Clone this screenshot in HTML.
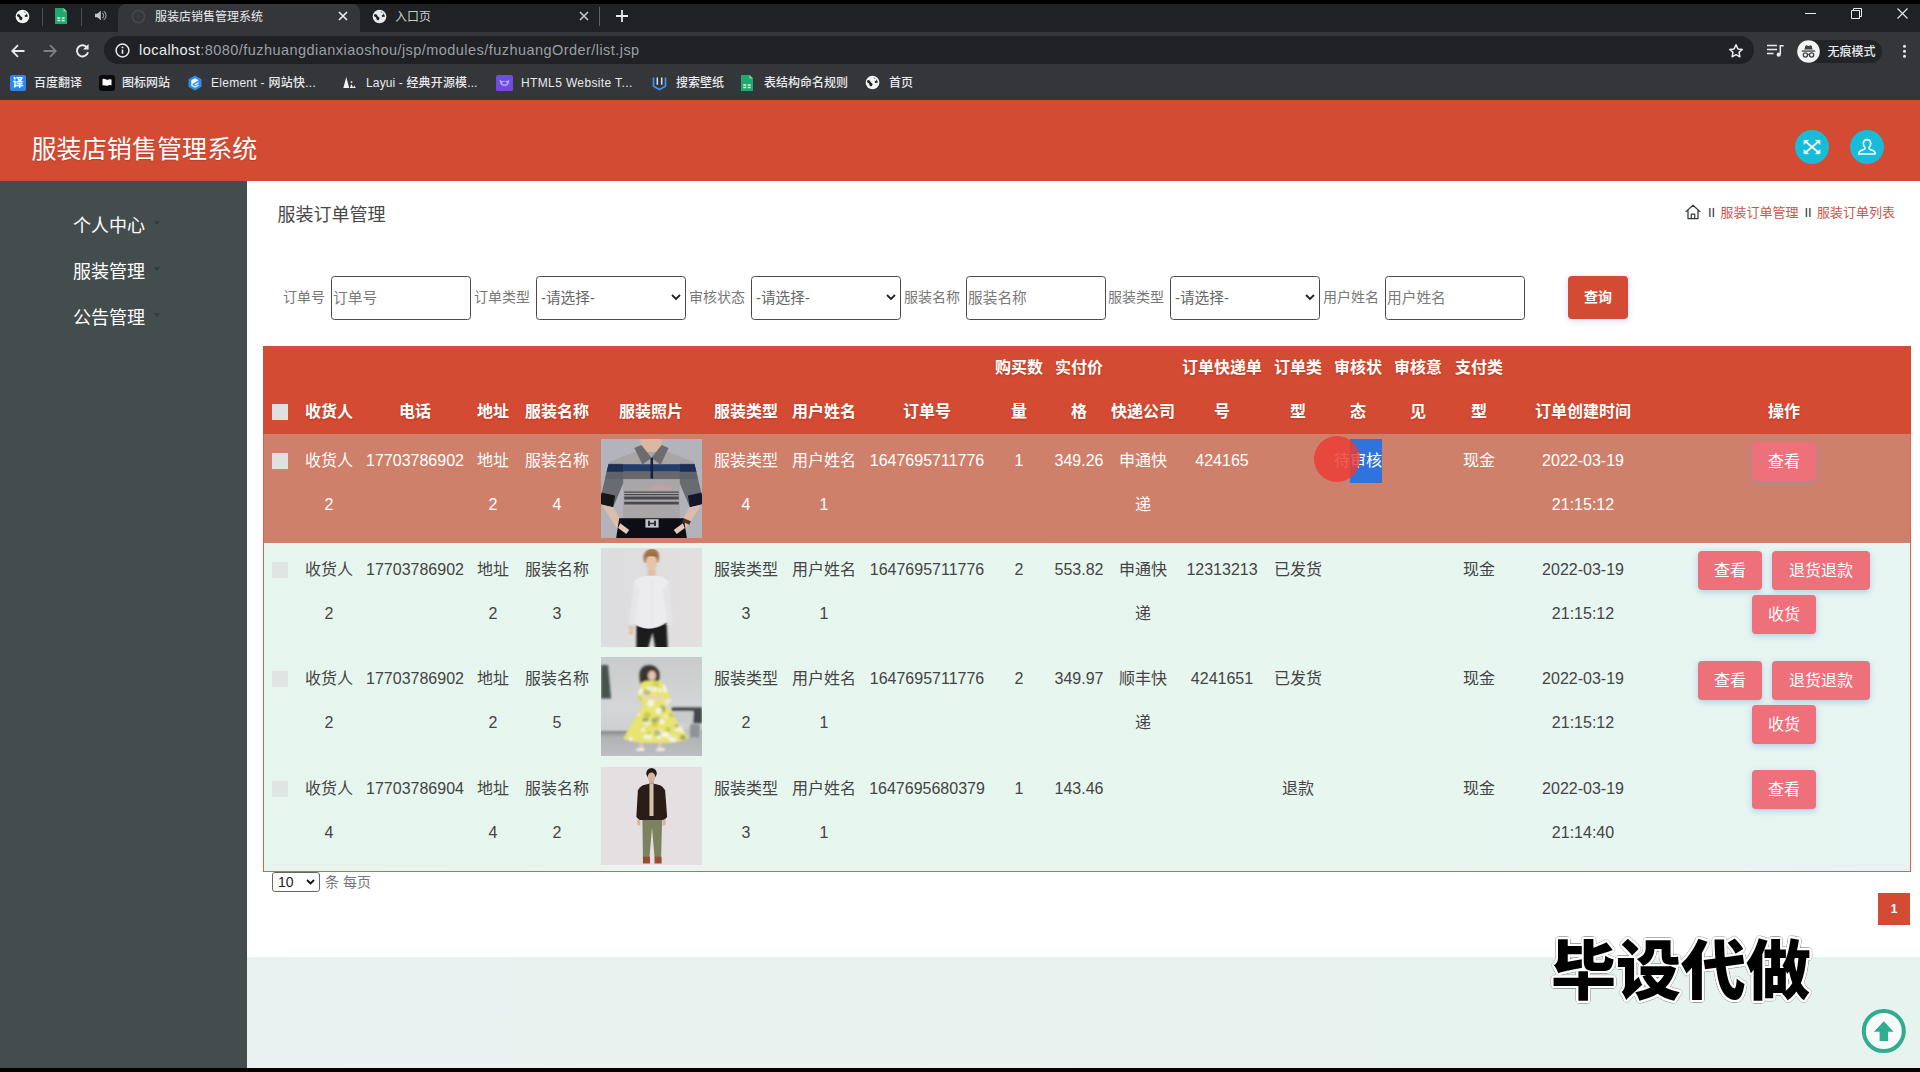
<!DOCTYPE html>
<html lang="zh-CN">
<head>
<meta charset="utf-8">
<title>服装店销售管理系统</title>
<style>
*{box-sizing:border-box;margin:0;padding:0}
html,body{width:1920px;height:1072px;overflow:hidden;background:#000}
body{position:relative;font-family:"Liberation Sans","Noto Sans CJK SC",sans-serif;color:#333}
.abs{position:absolute}
/* ---------- browser chrome ---------- */
#tabstrip{left:0;top:4px;width:1920px;height:28px;background:#202124}
#acttab{left:118px;top:4px;width:242px;height:28px;background:#35363a;border-radius:8px 8px 0 0}
#toolbar{left:0;top:32px;width:1920px;height:68px;background:#35363a}
#omni{left:104px;top:36px;width:1650px;height:28px;background:#202124;border-radius:14px}
.tabtxt{font-size:12px;color:#e8eaed;line-height:16px;white-space:nowrap}
.bm{font-size:12px;color:#e8eaed;line-height:16px;top:75px;white-space:nowrap;font-weight:500}
#url{left:139px;top:41px;font-size:14.5px;line-height:18px;color:#9aa0a6;white-space:nowrap;letter-spacing:0.45px}
#url b{font-weight:400;color:#e8eaed}
/* ---------- app ---------- */
#hdr{left:0;top:100px;width:1920px;height:81px;background:#d34b32}
#hdr h1{position:absolute;left:31.500px;top:31.500px;font-size:25px;line-height:34px;font-weight:400;color:#fff;letter-spacing:0.1px;white-space:nowrap;text-shadow:0 1px 1px rgba(0,0,0,.15)}
#side{left:0;top:181px;width:247px;height:887px;background:#444d4e}
#side div{position:absolute;left:73px;font-size:18px;line-height:24px;color:#fff;white-space:nowrap}
#main{left:247px;top:181px;width:1673px;height:776px;background:#fff}
#foot{left:247px;top:957px;width:1673px;height:111px;background:linear-gradient(90deg,#e9f2f0,#e7f3ee)}
#ptitle{left:277.500px;top:202.500px;font-size:18px;line-height:24px;color:#484848;white-space:nowrap}
.crumb{top:204px;font-size:13px;line-height:17px;color:#d0524b;white-space:nowrap}
.crumb i{font-style:normal;color:#333}
.flab{top:288px;font-size:14px;line-height:18px;color:#777;white-space:nowrap}
.fin{top:276px;height:43.500px;border:1px solid #4a4a4a;border-radius:3.500px;background:#fff;font-size:14.7px;line-height:41px;color:#7a7a7a;white-space:nowrap;padding-top:1px}
.fin.t{width:140px;padding-left:1px}
.fin.s{width:150px;padding-left:4px;color:#666}
.fin.s svg{position:absolute;right:4px;top:17px}
#qbtn{left:1568px;top:276px;width:60px;height:43px;background:#d34b32;border-radius:4px;color:#fff;font-size:14px;font-weight:700;line-height:43px;text-align:center;box-shadow:0 2px 7px rgba(140,150,220,.35)}

#tbl{left:263px;top:346px;width:1648px;height:526px;border:1px solid #da604a;background:linear-gradient(90deg,#e6f6ee 0%,#e7f6ef 70%,#e7f5f2 100%)}
#thead{left:263px;top:346px;width:1648px;height:88px;background:#d34b32}
#hov{left:264px;top:434px;width:1646px;height:108.500px;background:#cf806b}
.cb{width:16px;height:16px;background:#e0e0e0}
.cb.l{background:#dfe5e3}
.th{width:200px;text-align:center;font-size:16px;line-height:44px;font-weight:700;color:#fff;white-space:nowrap;text-shadow:0 1px 2px rgba(120,30,10,.35)}
.td{width:200px;text-align:center;font-size:16px;line-height:44px;color:#444;white-space:nowrap}
.td.h{color:#fff}
.sel{background:#2f74dd;color:#fff;display:inline-block;line-height:44px;height:44px;vertical-align:top}
.btn{height:39px;background:#ee707b;border-radius:4px;color:#fff;font-size:16px;line-height:39px;text-align:center;box-shadow:0 2px 6px rgba(120,150,220,.45);white-space:nowrap}

#wm{left:1551px;top:919px;font-family:"Noto Sans CJK SC",sans-serif;font-weight:900;font-size:65px;line-height:94px;color:#000;white-space:nowrap;letter-spacing:0px;-webkit-text-stroke:0;text-shadow:2.20px 0.00px 0 #fff,2.03px 0.84px 0 #fff,1.56px 1.56px 0 #fff,0.84px 2.03px 0 #fff,0.00px 2.20px 0 #fff,-0.84px 2.03px 0 #fff,-1.56px 1.56px 0 #fff,-2.03px 0.84px 0 #fff,-2.20px 0.00px 0 #fff,-2.03px -0.84px 0 #fff,-1.56px -1.56px 0 #fff,-0.84px -2.03px 0 #fff,-0.00px -2.20px 0 #fff,0.84px -2.03px 0 #fff,1.56px -1.56px 0 #fff,2.03px -0.84px 0 #fff,3.10px 0.00px 0 rgba(140,140,140,.42),2.86px 1.19px 0 rgba(140,140,140,.42),2.19px 2.19px 0 rgba(140,140,140,.42),1.19px 2.86px 0 rgba(140,140,140,.42),0.00px 3.10px 0 rgba(140,140,140,.42),-1.19px 2.86px 0 rgba(140,140,140,.42),-2.19px 2.19px 0 rgba(140,140,140,.42),-2.86px 1.19px 0 rgba(140,140,140,.42),-3.10px 0.00px 0 rgba(140,140,140,.42),-2.86px -1.19px 0 rgba(140,140,140,.42),-2.19px -2.19px 0 rgba(140,140,140,.42),-1.19px -2.86px 0 rgba(140,140,140,.42),-0.00px -3.10px 0 rgba(140,140,140,.42),1.19px -2.86px 0 rgba(140,140,140,.42),2.19px -2.19px 0 rgba(140,140,140,.42),2.86px -1.19px 0 rgba(140,140,140,.42)}
</style>
</head>
<body>
<!-- browser chrome -->
<div class="abs" id="tabstrip"></div>
<div class="abs" id="acttab"></div>
<div class="abs" id="toolbar"></div>
<div class="abs" id="omni"></div>
<div class="abs tabtxt" style="left:155px;top:9px">服装店销售管理系统</div>
<div class="abs tabtxt" style="left:395px;top:9px;color:#c8cacd">入口页</div>
<div class="abs" id="url"><b>localhost</b>:8080/fuzhuangdianxiaoshou/jsp/modules/fuzhuangOrder/list.jsp</div>
<div class="abs bm" style="left:34px">百度翻译</div>
<div class="abs bm" style="left:122px">图标网站</div>
<div class="abs bm" style="left:211px;letter-spacing:.27px">Element - 网站快...</div>
<div class="abs bm" style="left:366px;letter-spacing:.14px">Layui - 经典开源模...</div>
<div class="abs bm" style="left:521px;letter-spacing:.37px">HTML5 Website T...</div>
<div class="abs bm" style="left:676px">搜索壁纸</div>
<div class="abs bm" style="left:764px">表结构命名规则</div>
<div class="abs bm" style="left:889px">首页</div>
<!--CHROME-START-->
<!-- pinned tabs -->
<svg class="abs" style="left:15px;top:9px" width="15" height="15" viewBox="0 0 16 16"><circle cx="8" cy="8" r="7.300" fill="#f1f3f4"/><path d="M3.200 5.200c1.500.1 2.300.9 2.600 2 .3 1 1.300 1.100 1.900 1.800.6.700.2 1.900-.6 2.600-.7.600-1.700.3-2.200-.5-.4-.8-.1-1.700-.8-2.300-.7-.5-1.700-.8-1.900-1.700-.1-.7.300-1.500 1-1.900zM9.200 2.300c.2 1 1 1.400 1.900 1.500.9.100 1.300.9 1 1.700-.3.800-1.300.8-1.700 1.500-.3.600.2 1.300.9 1.400.9.100 1.700-.3 2.400.2-.1-2.900-1.800-5.400-4.500-6.300z" fill="#202124"/></svg>
<div class="abs" style="left:42px;top:8px;width:1px;height:18px;background:#4a4d51"></div>
<svg class="abs" style="left:53px;top:8px" width="16" height="16" viewBox="0 0 16 16"><path d="M2 0h8.500L14 3.500V16H2z" fill="#21a86f"/><path d="M10.500 0L14 3.500h-3.500z" fill="#8ed1b3"/><path d="M4.300 9.300h3v1.400h-3zM8.700 9.300h3v1.400h-3zM4.300 11.800h3v1.400h-3zM8.700 11.800h3v1.400h-3z" fill="#d8f3e7"/></svg>
<div class="abs" style="left:81px;top:8px;width:1px;height:18px;background:#4a4d51"></div>
<svg class="abs" style="left:95px;top:10px" width="12" height="11" viewBox="0 0 12 11"><path d="M0 3.800h2.200L5.800.7v9.600L2.200 7.200H0z" fill="#c4c7c9"/><path d="M7.300 3.100c.9.500 1.400 1.400 1.400 2.400s-.5 1.900-1.400 2.400M8.700 1.200c1.500.9 2.400 2.500 2.400 4.300s-.9 3.400-2.400 4.300" fill="none" stroke="#9da0a3" stroke-width="1.100"/></svg>
<!-- active tab favicon (faint) -->
<svg class="abs" style="left:131px;top:9px" width="15" height="15" viewBox="0 0 16 16"><circle cx="8" cy="8" r="6.500" fill="none" stroke="#46474b" stroke-width="2"/><circle cx="8" cy="8" r="2" fill="#3d3e42"/></svg>
<!-- tab close buttons -->
<svg class="abs" style="left:338px;top:11px" width="10" height="10" viewBox="0 0 10 10"><path d="M1 1l8 8M9 1l-8 8" stroke="#e8eaed" stroke-width="1.700"/></svg>
<svg class="abs" style="left:372px;top:9px" width="15" height="15" viewBox="0 0 16 16"><circle cx="8" cy="8" r="7.300" fill="#e8eaed"/><path d="M3.200 5.200c1.500.1 2.300.9 2.600 2 .3 1 1.300 1.100 1.900 1.800.6.700.2 1.900-.6 2.600-.7.600-1.700.3-2.200-.5-.4-.8-.1-1.700-.8-2.300-.7-.5-1.700-.8-1.900-1.700-.1-.7.300-1.500 1-1.900zM9.200 2.300c.2 1 1 1.400 1.900 1.500.9.100 1.300.9 1 1.700-.3.800-1.300.8-1.700 1.500-.3.600.2 1.300.9 1.400.9.100 1.700-.3 2.400.2-.1-2.900-1.800-5.400-4.500-6.300z" fill="#202124"/></svg>
<svg class="abs" style="left:579px;top:11px" width="10" height="10" viewBox="0 0 10 10"><path d="M1 1l8 8M9 1l-8 8" stroke="#c8cacd" stroke-width="1.600"/></svg>
<div class="abs" style="left:599px;top:7px;width:1px;height:19px;background:#5f6368"></div>
<svg class="abs" style="left:616px;top:10px" width="12" height="12" viewBox="0 0 12 12"><path d="M6 0v12M0 6h12" stroke="#e8eaed" stroke-width="1.800"/></svg>
<!-- window controls -->
<div class="abs" style="left:1805px;top:13px;width:11px;height:1px;background:#e8eaed"></div>
<svg class="abs" style="left:1851px;top:8px" width="11" height="11" viewBox="0 0 11 11"><path d="M.5 2.500h8v8h-8z M2.500 2.500v-2h8v8h-2" fill="none" stroke="#e8eaed" stroke-width="1"/></svg>
<svg class="abs" style="left:1897px;top:8px" width="11" height="11" viewBox="0 0 11 11"><path d="M.5.500l10 10M10.500.500l-10 10" stroke="#e8eaed" stroke-width="1.100"/></svg>
<!-- nav -->
<svg class="abs" style="left:11px;top:44px" width="14" height="14" viewBox="0 0 14 14"><path d="M13.500 7H1.500M7 1.200L1.200 7 7 12.800" fill="none" stroke="#e8eaed" stroke-width="1.800"/></svg>
<svg class="abs" style="left:43px;top:44px" width="14" height="14" viewBox="0 0 14 14"><path d="M.5 7h12M7 1.200L12.800 7 7 12.800" fill="none" stroke="#7d8084" stroke-width="1.800"/></svg>
<svg class="abs" style="left:75px;top:43px" width="15" height="15" viewBox="0 0 15 15"><path d="M12.300 4.800A5.600 5.600 0 1 0 13 9.300" fill="none" stroke="#e8eaed" stroke-width="1.900"/><path d="M13.600 1v5.600H8z" fill="#e8eaed"/></svg>
<svg class="abs" style="left:115px;top:43px" width="15" height="15" viewBox="0 0 15 15"><circle cx="7.500" cy="7.500" r="6.400" fill="none" stroke="#e8eaed" stroke-width="1.500"/><path d="M7.500 6.600v4.200" stroke="#e8eaed" stroke-width="1.600"/><circle cx="7.500" cy="4.400" r="0.950" fill="#e8eaed"/></svg>
<!-- right toolbar -->
<svg class="abs" style="left:1728px;top:43px" width="16" height="16" viewBox="0 0 16 16"><path d="M8 1.800l1.900 4.100 4.400.5-3.300 3 .9 4.400L8 11.600l-3.900 2.200.9-4.400-3.300-3 4.400-.5z" fill="none" stroke="#e8eaed" stroke-width="1.500" stroke-linejoin="round"/></svg>
<svg class="abs" style="left:1767px;top:44px" width="17" height="14" viewBox="0 0 17 14"><path d="M0 1.500h10M0 5.500h10M0 9.500h6.500" stroke="#e8eaed" stroke-width="1.600"/><path d="M13.300 1v9.300M13.300 1.800h3.400" stroke="#e8eaed" stroke-width="1.500" fill="none"/><circle cx="11.700" cy="10.700" r="2.100" fill="#e8eaed"/></svg>
<div class="abs" style="left:1797px;top:40px;width:85px;height:23px;border-radius:11.500px;background:#232427"></div>
<svg class="abs" style="left:1797px;top:40px" width="23" height="23" viewBox="0 0 23 23"><circle cx="11.500" cy="11.500" r="11.300" fill="#f1f3f4"/><path d="M8.300 6.200c.3-.8.900-1 1.500-.7l1.700.6 1.700-.6c.6-.3 1.200-.1 1.500.7l1 3.300H7.300z" fill="#3c4043"/><path d="M4.800 10.400h13.400v1.300H4.800z" fill="#3c4043"/><circle cx="8.400" cy="15" r="2.100" fill="none" stroke="#3c4043" stroke-width="1.300"/><circle cx="14.600" cy="15" r="2.100" fill="none" stroke="#3c4043" stroke-width="1.300"/><path d="M10.400 14.700c.7-.5 1.500-.5 2.200 0" fill="none" stroke="#3c4043" stroke-width="1.100"/></svg>
<svg class="abs" style="left:1902px;top:44px" width="5" height="15" viewBox="0 0 5 15"><circle cx="2.500" cy="2.300" r="1.500" fill="#e8eaed"/><circle cx="2.500" cy="7.300" r="1.500" fill="#e8eaed"/><circle cx="2.500" cy="12.300" r="1.500" fill="#e8eaed"/></svg>
<!-- bookmark icons -->
<div class="abs" style="left:10px;top:75px;width:16px;height:16px;border-radius:2px;background:#2a86f3;color:#fff;font-size:11px;line-height:16px;text-align:center;font-weight:700">译</div>
<svg class="abs" style="left:99px;top:75px" width="16" height="16" viewBox="0 0 16 16"><rect width="16" height="16" rx="3" fill="#0b0b0c"/><path d="M3.500 4.200c2-1.300 3.500 1 5 .5 1.500-.5 2.500-.7 4-.2v6c-1.500-.7-2.700-.3-4 .2-1.500.5-3-.8-5-.2z" fill="#fff"/></svg>
<svg class="abs" style="left:187px;top:75px" width="16" height="16" viewBox="0 0 16 16"><path d="M8 .5l6.500 3.750v7.500L8 15.500 1.500 11.750v-7.500z" fill="#2c8df0"/><path d="M11.500 5.200L8 3.200 4.300 5.300v5.400L8 12.800l3.500-2v-1.300L8 11.500 5.500 10V8.900L11.500 5.600zM11.500 7.200v1.300L8.300 10.300 7.200 9.600z" fill="#fff"/></svg>
<svg class="abs" style="left:343px;top:77px" width="14" height="12" viewBox="0 0 14 12"><path d="M3.300 0l2.900 11H.3zM8.500 7l1.700 4H6.800zM11.300 8.500l1.500 2.500H9.800z" fill="#f1f3f4"/><rect x="7.700" y="4.300" width="1.600" height="1.600" fill="#f1f3f4"/></svg>
<svg class="abs" style="left:496px;top:75px" width="17" height="16" viewBox="0 0 17 16"><rect width="17" height="16" rx="2" fill="#6a4fe0"/><path d="M0 10h17v4a2 2 0 0 1-2 2H2a2 2 0 0 1-2-2z" fill="#7b47d9"/><path d="M3.500 4.500l2.200 1.400h5.600l2.200-1.400-.6 3.300c-.3 2-2 3.200-4.400 3.200s-4.100-1.200-4.400-3.200z" fill="#b9a8ff"/><ellipse cx="8.500" cy="8" rx="2.400" ry="1.500" fill="#6a4fe0"/></svg>
<svg class="abs" style="left:652px;top:76px" width="15" height="15" viewBox="0 0 15 15"><path d="M1.500 1.500v8.800l6 3.200 6-3.200V1.500" fill="none" stroke="#3f8ff5" stroke-width="1.700"/><path d="M5.300 1.500v7.200M9.700 1.500v7.200" stroke="#cfe2ff" stroke-width="1.500"/></svg>
<svg class="abs" style="left:740px;top:75px" width="14" height="16" viewBox="2 0 12 16"><path d="M2 0h8.500L14 3.500V16H2z" fill="#21a86f"/><path d="M10.500 0L14 3.500h-3.500z" fill="#8ed1b3"/><path d="M4.300 9.300h3v1.400h-3zM8.700 9.300h3v1.400h-3zM4.300 11.800h3v1.400h-3zM8.700 11.800h3v1.400h-3z" fill="#d8f3e7"/></svg>
<svg class="abs" style="left:865px;top:75px" width="15" height="15" viewBox="0 0 16 16"><circle cx="8" cy="8" r="7.300" fill="#f1f3f4"/><path d="M3.200 5.200c1.500.1 2.300.9 2.600 2 .3 1 1.300 1.100 1.900 1.800.6.700.2 1.900-.6 2.600-.7.600-1.700.3-2.200-.5-.4-.8-.1-1.700-.8-2.300-.7-.5-1.700-.8-1.900-1.700-.1-.7.300-1.500 1-1.900zM9.200 2.300c.2 1 1 1.400 1.900 1.500.9.100 1.300.9 1 1.700-.3.800-1.300.8-1.700 1.500-.3.600.2 1.300.9 1.400.9.100 1.700-.3 2.400.2-.1-2.900-1.800-5.400-4.500-6.300z" fill="#202124"/></svg>
<!--CHROME-END-->
<div class="abs tabtxt" style="left:1827.500px;top:44px;font-weight:500">无痕模式</div>

<!-- app -->
<div class="abs" id="hdr"><h1>服装店销售管理系统</h1></div>
<div class="abs" id="side">
  <div style="top:33px">个人中心</div>
  <div style="top:79px">服装管理</div>
  <div style="top:125px">公告管理</div>
</div>
<div class="abs" id="main"></div>
<div class="abs" id="foot"></div>
<div class="abs" id="ptitle">服装订单管理</div>
<div class="abs crumb" style="left:1708px"><i>II</i></div><div class="abs crumb" style="left:1720.500px">服装订单管理</div><div class="abs crumb" style="left:1804.500px"><i>II</i></div><div class="abs crumb" style="left:1817px">服装订单列表</div>

<div class="abs flab" style="left:283px">订单号</div>
<div class="abs fin t" style="left:331px">订单号</div>
<div class="abs flab" style="left:474px">订单类型</div>
<div class="abs fin s" style="left:536px">-请选择-<svg width="10" height="7" viewBox="0 0 10 7"><path d="M1 1l4 4 4-4" fill="none" stroke="#222" stroke-width="1.8"/></svg></div>
<div class="abs flab" style="left:689px">审核状态</div>
<div class="abs fin s" style="left:751px">-请选择-<svg width="10" height="7" viewBox="0 0 10 7"><path d="M1 1l4 4 4-4" fill="none" stroke="#222" stroke-width="1.8"/></svg></div>
<div class="abs flab" style="left:904px">服装名称</div>
<div class="abs fin t" style="left:966px">服装名称</div>
<div class="abs flab" style="left:1108px">服装类型</div>
<div class="abs fin s" style="left:1170px">-请选择-<svg width="10" height="7" viewBox="0 0 10 7"><path d="M1 1l4 4 4-4" fill="none" stroke="#222" stroke-width="1.8"/></svg></div>
<div class="abs flab" style="left:1323px">用户姓名</div>
<div class="abs fin t" style="left:1385px">用户姓名</div>
<div class="abs" id="qbtn">查询</div>

<!--TABLE-START-->
<div class="abs" id="tbl"></div>
<div class="abs" id="thead"></div>
<div class="abs" id="hov"></div>
<div class="abs cb" style="left:272px;top:404px"></div>
<div class="abs th" style="left:229px;top:390px">收货人</div>
<div class="abs th" style="left:315px;top:390px">电话</div>
<div class="abs th" style="left:393px;top:390px">地址</div>
<div class="abs th" style="left:457px;top:390px">服装名称</div>
<div class="abs th" style="left:551px;top:390px">服装照片</div>
<div class="abs th" style="left:646px;top:390px">服装类型</div>
<div class="abs th" style="left:724px;top:390px">用户姓名</div>
<div class="abs th" style="left:827px;top:390px">订单号</div>
<div class="abs th" style="left:919px;top:346px">购买数<br>量</div>
<div class="abs th" style="left:979px;top:346px">实付价<br>格</div>
<div class="abs th" style="left:1043px;top:390px">快递公司</div>
<div class="abs th" style="left:1122px;top:346px">订单快递单<br>号</div>
<div class="abs th" style="left:1198px;top:346px">订单类<br>型</div>
<div class="abs th" style="left:1258px;top:346px">审核状<br>态</div>
<div class="abs th" style="left:1318px;top:346px">审核意<br>见</div>
<div class="abs th" style="left:1379px;top:346px">支付类<br>型</div>
<div class="abs th" style="left:1483px;top:390px">订单创建时间</div>
<div class="abs th" style="left:1684px;top:390px">操作</div>
<div class="abs cb" style="left:272px;top:453px"></div>
<div class="abs td h" style="left:229px;top:439px">收货人<br>2</div>
<div class="abs td h" style="left:315px;top:439px">17703786902</div>
<div class="abs td h" style="left:393px;top:439px">地址<br>2</div>
<div class="abs td h" style="left:457px;top:439px">服装名称<br>4</div>
<div class="abs td h" style="left:646px;top:439px">服装类型<br>4</div>
<div class="abs td h" style="left:724px;top:439px">用户姓名<br>1</div>
<div class="abs td h" style="left:827px;top:439px">1647695711776</div>
<div class="abs td h" style="left:919px;top:439px">1</div>
<div class="abs td h" style="left:979px;top:439px">349.26</div>
<div class="abs td h" style="left:1043px;top:439px">申通快<br>递</div>
<div class="abs td h" style="left:1122px;top:439px">424165</div>
<div class="abs td h" style="left:1258px;top:439px">待<span class="sel">审核</span></div>
<div class="abs td h" style="left:1379px;top:439px">现金</div>
<div class="abs td h" style="left:1483px;top:439px">2022-03-19<br>21:15:12</div>
<!--IMG1-->
<div class="abs btn" style="left:1752px;top:442.3px;width:64px">查看</div>
<div class="abs cb l" style="left:272px;top:561.7px"></div>
<div class="abs td" style="left:229px;top:547.7px">收货人<br>2</div>
<div class="abs td" style="left:315px;top:547.7px">17703786902</div>
<div class="abs td" style="left:393px;top:547.7px">地址<br>2</div>
<div class="abs td" style="left:457px;top:547.7px">服装名称<br>3</div>
<div class="abs td" style="left:646px;top:547.7px">服装类型<br>3</div>
<div class="abs td" style="left:724px;top:547.7px">用户姓名<br>1</div>
<div class="abs td" style="left:827px;top:547.7px">1647695711776</div>
<div class="abs td" style="left:919px;top:547.7px">2</div>
<div class="abs td" style="left:979px;top:547.7px">553.82</div>
<div class="abs td" style="left:1043px;top:547.7px">申通快<br>递</div>
<div class="abs td" style="left:1122px;top:547.7px">12313213</div>
<div class="abs td" style="left:1198px;top:547.7px">已发货</div>
<div class="abs td" style="left:1379px;top:547.7px">现金</div>
<div class="abs td" style="left:1483px;top:547.7px">2022-03-19<br>21:15:12</div>
<!--IMG2-->
<div class="abs btn" style="left:1698px;top:551.0px;width:64px">查看</div>
<div class="abs btn" style="left:1772px;top:551.0px;width:98px">退货退款</div>
<div class="abs btn" style="left:1752px;top:595.0px;width:64px">收货</div>
<div class="abs cb l" style="left:272px;top:671.2px"></div>
<div class="abs td" style="left:229px;top:657.2px">收货人<br>2</div>
<div class="abs td" style="left:315px;top:657.2px">17703786902</div>
<div class="abs td" style="left:393px;top:657.2px">地址<br>2</div>
<div class="abs td" style="left:457px;top:657.2px">服装名称<br>5</div>
<div class="abs td" style="left:646px;top:657.2px">服装类型<br>2</div>
<div class="abs td" style="left:724px;top:657.2px">用户姓名<br>1</div>
<div class="abs td" style="left:827px;top:657.2px">1647695711776</div>
<div class="abs td" style="left:919px;top:657.2px">2</div>
<div class="abs td" style="left:979px;top:657.2px">349.97</div>
<div class="abs td" style="left:1043px;top:657.2px">顺丰快<br>递</div>
<div class="abs td" style="left:1122px;top:657.2px">4241651</div>
<div class="abs td" style="left:1198px;top:657.2px">已发货</div>
<div class="abs td" style="left:1379px;top:657.2px">现金</div>
<div class="abs td" style="left:1483px;top:657.2px">2022-03-19<br>21:15:12</div>
<!--IMG3-->
<div class="abs btn" style="left:1698px;top:660.5px;width:64px">查看</div>
<div class="abs btn" style="left:1772px;top:660.5px;width:98px">退货退款</div>
<div class="abs btn" style="left:1752px;top:704.5px;width:64px">收货</div>
<div class="abs cb l" style="left:272px;top:781px"></div>
<div class="abs td" style="left:229px;top:767px">收货人<br>4</div>
<div class="abs td" style="left:315px;top:767px">17703786904</div>
<div class="abs td" style="left:393px;top:767px">地址<br>4</div>
<div class="abs td" style="left:457px;top:767px">服装名称<br>2</div>
<div class="abs td" style="left:646px;top:767px">服装类型<br>3</div>
<div class="abs td" style="left:724px;top:767px">用户姓名<br>1</div>
<div class="abs td" style="left:827px;top:767px">1647695680379</div>
<div class="abs td" style="left:919px;top:767px">1</div>
<div class="abs td" style="left:979px;top:767px">143.46</div>
<div class="abs td" style="left:1198px;top:767px">退款</div>
<div class="abs td" style="left:1379px;top:767px">现金</div>
<div class="abs td" style="left:1483px;top:767px">2022-03-19<br>21:14:40</div>
<!--IMG4-->
<div class="abs btn" style="left:1752px;top:770.3px;width:64px">查看</div>
<!--TABLE-END-->
<!--IMGS-START-->
<!-- product photos -->
<svg class="abs" style="left:601px;top:439px" width="101" height="99" viewBox="0 0 100 100" preserveAspectRatio="none">
<defs><filter id="b1" x="-5%" y="-5%" width="110%" height="110%"><feGaussianBlur stdDeviation="0.700"/></filter><clipPath id="c1"><rect width="100" height="100"/></clipPath>
<clipPath id="s1"><path d="M8 23l26-10h32l26 10 8 34v9l-12 3-10-24 0 36H22l0-36-10 24-12-3v-9z"/></clipPath></defs>
<g clip-path="url(#c1)"><rect width="100" height="100" fill="#b3b3bb"/><g filter="url(#b1)">
<path d="M39 0h21v10l-10.500 10L39 10z" fill="#dcb8a3"/>
<g clip-path="url(#s1)">
<rect width="100" height="100" fill="#a9a6a7"/>
<rect x="0" y="25.500" width="100" height="7.500" fill="#233d6c"/>
<rect x="0" y="33" width="100" height="7.500" fill="#69696d"/>
<path d="M0 25l22 0 0 20-8 24-14 0z" fill="#5d6166" opacity=".85"/><path d="M100 25l-22 0 0 20 8 24 14 0z" fill="#5d6166" opacity=".85"/>
<path d="M0 25.500h22v7.500H0zM78 25.500h22v7.500H78z" fill="#1e2f55"/>
<path d="M0 54l14 3-2 12-12-3z" fill="#121318"/><path d="M100 54l-14 3 2 12 12-3z" fill="#14152a"/>
<rect x="48" y="47" width="22" height="4.500" fill="#c9a0a4" opacity=".8"/>
<path d="M23 53h54v1.200H23zM23 55.500h54v1.200H23zM23 58h54v3H23zM23 63.500h54v2.600H23z" fill="#4a4a4e"/>
</g>
<path d="M33 9l7-3 10 13-9 7z" fill="#6d6c70"/><path d="M67 9l-7-3-10 13 9 7z" fill="#6d6c70"/>
<path d="M49 19h2.600v21H49z" fill="#18233f"/>
<path d="M1 67l11 2 14 22-7 5z" fill="#dcbcab"/><path d="M99 67l-11 2-14 22 7 5z" fill="#dcbcab"/>
<path d="M18 80h64l3 20H15z" fill="#111114"/>
<path d="M44 81h13v8.500H44z" fill="#c3c6cc"/><path d="M46.500 82.500h2v5.500h-2zM52.500 82.500h2v5.500h-2zM46.500 84.500h8v1.600h-8z" fill="#2c2d33"/>
<path d="M19 85l9 7-3 4-8-6z" fill="#e6c8b8"/><path d="M81 85l-9 7 3 4 8-6z" fill="#e6c8b8"/>
<path d="M82 80l7 3-1.500 3.500-7-3z" fill="#4e3424"/>
</g></g></svg>
<svg class="abs" style="left:601px;top:548px" width="101" height="99" viewBox="0 0 100 100" preserveAspectRatio="none">
<defs><filter id="b2" x="-5%" y="-5%" width="110%" height="110%"><feGaussianBlur stdDeviation="0.800"/></filter><clipPath id="c2"><rect width="100" height="100"/></clipPath><linearGradient id="g2" x1="0" y1="0" x2="1" y2="0"><stop offset="0" stop-color="#dcdde0"/><stop offset="1" stop-color="#e2dfdf"/></linearGradient></defs>
<g clip-path="url(#c2)"><rect width="100" height="100" fill="url(#g2)"/><g filter="url(#b2)">
<path d="M42 10c0-6 4-9 8.500-9S58 4 57.500 10l-1 5H43z" fill="#a9784c"/>
<ellipse cx="50" cy="15" rx="5.500" ry="8.500" fill="#e6c4ac"/>
<path d="M42.500 9c2-4 6-6 10-5 2 1 4 3 4.500 6-4-2-8-2-14.500-1z" fill="#a06f45"/>
<path d="M46 22h8v8h-8z" fill="#e3bfa7"/>
<path d="M33 34c4-5 9-6 17-6s13 1 17 6l3 42c-3 1-5 1-7 0-3 4-8 5-13 5s-11-1-15-5c-2 1-4 1-6 0z" fill="#ececef"/>
<path d="M33 34l-5 42 5 1 6-34z" fill="#e6e6e9"/><path d="M67 34l4 43-5 1-5-35z" fill="#e4e4e7"/>
<path d="M50.500 30v50" stroke="#dcdce0" stroke-width="0.800"/>
<path d="M27.500 78l5.500 1-1 9-4.500-1z" fill="#e6c4ac"/>
<path d="M35 78c8 5 20 5 30-3l1 25H53.500l-2.500-15-4 15H35z" fill="#1a1a1c"/>
</g></g></svg>
<svg class="abs" style="left:601px;top:657px" width="101" height="99" viewBox="0 0 100 100" preserveAspectRatio="none">
<defs><filter id="b3" x="-5%" y="-5%" width="110%" height="110%"><feGaussianBlur stdDeviation="0.900"/></filter><clipPath id="c3"><rect width="100" height="100"/></clipPath><linearGradient id="g3" x1="0" y1="0" x2="0" y2="1"><stop offset="0" stop-color="#c9cccc"/><stop offset="0.500" stop-color="#d4d5d6"/><stop offset="0.730" stop-color="#cfd0d2"/><stop offset="0.760" stop-color="#8f9195"/><stop offset="0.810" stop-color="#b0b2b6"/><stop offset="1" stop-color="#bdbec1"/></linearGradient>
<clipPath id="s3"><path d="M40 26c6-3 14-3 22 0l7 14-6 6 24 36c-6 4-18 5-32 5s-27-1-33-5l20-34-6-8z"/></clipPath></defs>
<g clip-path="url(#c3)"><rect width="100" height="100" fill="url(#g3)"/><g filter="url(#b3)">
<path d="M0 8h7l3 34H0z" fill="#46534f"/>
<path d="M26 73h74v8H26z" fill="#c3c5c8"/>
<path d="M70 51h30v3.500H70z" fill="#3b3d41"/><path d="M92 52c3-1 6-1 8 0v15h-9z" fill="#45474b"/>
<path d="M72 55h19v12H72z" fill="#c9cbcd"/><path d="M88 68h10v13H88z" fill="#8e9397"/>
<path d="M38 18c0-7 5-10 10-10s10 4 10 10c0 5-1 9-3 11l-14 3c-2-3-3-8-3-14z" fill="#3a3533"/>
<ellipse cx="50.500" cy="19" rx="4" ry="5" fill="#e3c2b1"/>
<g clip-path="url(#s3)"><rect width="100" height="100" fill="#e8e472"/><ellipse cx="42.7" cy="34.7" rx="2.9" ry="1.8" fill="#c9cf4a"/><ellipse cx="36.8" cy="58.0" rx="1.7" ry="1.5" fill="#f4f3e2"/><ellipse cx="64.1" cy="59.8" rx="1.7" ry="1.5" fill="#f4f3e2"/><ellipse cx="41.6" cy="73.3" rx="2.0" ry="1.7" fill="#f7f6ee"/><ellipse cx="69.8" cy="58.7" rx="2.8" ry="2.4" fill="#c9cf4a"/><ellipse cx="49.9" cy="44.2" rx="2.8" ry="2.3" fill="#f1efd0"/><ellipse cx="37.4" cy="36.4" rx="3.2" ry="2.0" fill="#f1efd0"/><ellipse cx="56.8" cy="76.8" rx="3.1" ry="2.3" fill="#f4f3e2"/><ellipse cx="54.2" cy="28.3" rx="2.9" ry="2.9" fill="#c9cf4a"/><ellipse cx="75.2" cy="73.5" rx="2.3" ry="1.8" fill="#f4f3e2"/><ellipse cx="60.6" cy="52.5" rx="3.3" ry="3.5" fill="#a5ad62"/><ellipse cx="60.5" cy="65.5" rx="2.5" ry="2.4" fill="#f7f6ee"/><ellipse cx="44.3" cy="80.6" rx="2.3" ry="2.1" fill="#f4f3e2"/><ellipse cx="47.4" cy="76.5" rx="1.8" ry="1.5" fill="#c9cf4a"/><ellipse cx="39.4" cy="33.9" rx="2.5" ry="2.2" fill="#f7f6ee"/><ellipse cx="49.1" cy="46.8" rx="3.4" ry="3.6" fill="#f4f3e2"/><ellipse cx="66.1" cy="26.7" rx="3.3" ry="2.3" fill="#f1efd0"/><ellipse cx="45.8" cy="58.8" rx="3.5" ry="3.3" fill="#c9cf4a"/><ellipse cx="81.0" cy="81.2" rx="3.0" ry="2.6" fill="#a5ad62"/><ellipse cx="47.9" cy="32.0" rx="2.9" ry="1.8" fill="#f4f3e2"/><ellipse cx="57.6" cy="81.0" rx="2.8" ry="1.8" fill="#f4f3e2"/><ellipse cx="63.0" cy="34.6" rx="2.1" ry="1.6" fill="#f1efd0"/><ellipse cx="53.2" cy="32.7" rx="2.6" ry="2.8" fill="#f4f3e2"/><ellipse cx="53.9" cy="31.0" rx="1.8" ry="1.4" fill="#f1efd0"/><ellipse cx="53.5" cy="66.1" rx="2.6" ry="1.8" fill="#c9cf4a"/><ellipse cx="45.3" cy="66.0" rx="3.4" ry="3.4" fill="#f1efd0"/><ellipse cx="45.7" cy="35.7" rx="3.1" ry="2.7" fill="#b5b98a"/><ellipse cx="55.2" cy="62.9" rx="2.8" ry="2.8" fill="#b5b98a"/><ellipse cx="79.7" cy="72.8" rx="3.2" ry="3.1" fill="#f4f3e2"/><ellipse cx="71.2" cy="83.4" rx="3.2" ry="2.7" fill="#f4f3e2"/><ellipse cx="68.5" cy="81.5" rx="2.5" ry="2.7" fill="#f1efd0"/><ellipse cx="63.7" cy="78.2" rx="3.3" ry="2.8" fill="#f7f6ee"/><ellipse cx="44.1" cy="63.3" rx="3.3" ry="2.2" fill="#a5ad62"/><ellipse cx="74.8" cy="69.5" rx="2.6" ry="1.8" fill="#b5b98a"/><ellipse cx="64.5" cy="31.0" rx="3.5" ry="3.4" fill="#f4f3e2"/><ellipse cx="48.1" cy="80.9" rx="3.0" ry="2.1" fill="#f4f3e2"/><ellipse cx="52.6" cy="64.0" rx="2.8" ry="2.5" fill="#a5ad62"/><ellipse cx="58.4" cy="33.6" rx="1.6" ry="1.8" fill="#f7f6ee"/><ellipse cx="29.7" cy="83.2" rx="2.0" ry="2.1" fill="#f4f3e2"/><ellipse cx="37.6" cy="43.0" rx="2.1" ry="1.9" fill="#f1efd0"/><ellipse cx="58.1" cy="74.4" rx="1.7" ry="1.7" fill="#f4f3e2"/><ellipse cx="66.4" cy="73.3" rx="2.6" ry="2.7" fill="#c9cf4a"/><ellipse cx="55.7" cy="76.6" rx="3.2" ry="2.9" fill="#b5b98a"/><ellipse cx="53.1" cy="68.1" rx="2.7" ry="2.1" fill="#c9cf4a"/><ellipse cx="57.2" cy="54.0" rx="3.2" ry="3.3" fill="#f4f3e2"/><ellipse cx="37.4" cy="42.1" rx="3.1" ry="2.7" fill="#c9cf4a"/></g>
<path d="M40 39l22 2-1 3-21-2z" fill="#ecd3c3"/><path d="M62 44l6-3 2 3-5 6z" fill="#f1e4dc"/>
<path d="M38.500 86h3v7h-3zM57 86h3v7h-3z" fill="#e5c9b6"/><path d="M35 92h8v3h-8zM55 92h8v3h-8z" fill="#f1ecdf"/>
</g></g></svg>
<svg class="abs" style="left:601px;top:767px" width="101" height="98" viewBox="0 0 100 100" preserveAspectRatio="none">
<defs><filter id="b4" x="-5%" y="-5%" width="110%" height="110%"><feGaussianBlur stdDeviation="0.700"/></filter><clipPath id="c4"><rect width="100" height="100"/></clipPath></defs>
<g clip-path="url(#c4)"><rect width="100" height="100" fill="#e4e0e2"/><g filter="url(#b4)">
<ellipse cx="50" cy="6.500" rx="5.200" ry="5.500" fill="#241c19"/>
<ellipse cx="50" cy="10.500" rx="3.700" ry="5" fill="#d9b59f"/>
<path d="M47.500 14h5v5h-5z" fill="#d2ab94"/>
<path d="M36.500 24c2-5 7-7 13.500-7s11.500 2 13.500 7l2 27-3 3H38l-3-3z" fill="#2a1e19"/>
<path d="M48 17h4v33h-4z" fill="#d9c2ac"/>
<path d="M36 53l3 1v6l-3-1zM64 53l-3 1v6l3-1z" fill="#d8b39c"/>
<path d="M41 54h19.500l-1 38h-6.500l-2.500-30L48 92h-6.500z" fill="#7b8161"/>
<path d="M41.500 91.500h7v7h-7zM53 91.500h7v7h-7z" fill="#97502f"/>
</g></g></svg>
<!--IMGS-END-->
<!--EXTRAS-START-->
<!-- header icons -->
<svg class="abs" style="left:1795px;top:130px" width="34" height="34" viewBox="0 0 34 34"><circle cx="17" cy="17" r="17" fill="#17bcd9"/><g stroke="#fff" stroke-width="1.7" fill="#fff" stroke-linecap="round"><path d="M10.5 11.5L23.5 22.5M23.5 11.5L10.5 22.5" fill="none"/><path d="M9.3 10.3h4.2l-4.2 3.8zM24.7 10.3h-4.2l4.2 3.8zM9.3 23.7h4.2l-4.2-3.8zM24.7 23.7h-4.2l4.2-3.8z" stroke-width="0.6"/></g></svg>
<svg class="abs" style="left:1850px;top:130px" width="34" height="34" viewBox="0 0 34 34"><circle cx="17" cy="17" r="17" fill="#17bcd9"/><path d="M17 9.6c-2.3 0-3.7 1.8-3.7 4 0 1.700.7 3.100 1.700 3.900.2.900-.2 1.500-1.200 1.900l-3.300 1.400c-1.100.5-1.700 1.600-1.900 3.200h16.800c-.2-1.600-.8-2.700-1.900-3.200l-3.300-1.400c-1-.4-1.400-1-1.200-1.900 1-.8 1.700-2.200 1.700-3.900 0-2.200-1.400-4-3.700-4z" fill="none" stroke="#fff" stroke-width="1.6" stroke-linejoin="round"/></svg>
<!-- sidebar carets -->
<svg class="abs" style="left:154px;top:220px" width="6" height="6" viewBox="0 0 6 6"><path d="M0 1h6L3 5z" fill="#343d3f"/></svg>
<svg class="abs" style="left:154px;top:266px" width="6" height="6" viewBox="0 0 6 6"><path d="M0 1h6L3 5z" fill="#343d3f"/></svg>
<svg class="abs" style="left:154px;top:312px" width="6" height="6" viewBox="0 0 6 6"><path d="M0 1h6L3 5z" fill="#343d3f"/></svg>
<!-- breadcrumb home -->
<svg class="abs" style="left:1685px;top:204px" width="16" height="16" viewBox="0 0 16 16"><path d="M1 7.600L8 1.200l7 6.400M3 6.600v7.900h10V6.600M6.300 14.500v-4.300h3.400v4.300" fill="none" stroke="#2f3a36" stroke-width="1.250" stroke-linejoin="round" stroke-linecap="round"/></svg>
<!-- cursor highlight -->
<div class="abs" style="left:1314px;top:436px;width:46px;height:46px;border-radius:50%;background:rgba(236,58,50,.82)"></div>
<!-- page size -->
<div class="abs" style="left:272px;top:872px;width:48px;height:20px;border:1px solid #666;border-radius:3px;background:#fff;font-size:14px;line-height:18px;padding-left:5px;color:#222">10<svg class="abs" style="right:4px;top:6px" width="9" height="6" viewBox="0 0 9 6"><path d="M1 1l3.500 3.500L8 1" fill="none" stroke="#111" stroke-width="1.8"/></svg></div>
<div class="abs" style="left:325px;top:873px;font-size:14px;line-height:18px;color:#777;white-space:nowrap">条 每页</div>
<!-- pagination -->
<div class="abs" style="left:1878px;top:893px;width:32px;height:32px;background:#d34b32;color:#fff;font-size:12px;font-weight:700;line-height:32px;text-align:center">1</div>
<!-- watermark -->
<div class="abs" id="wm">毕设代做</div>
<!-- back to top -->
<svg class="abs" style="left:1861px;top:1009px" width="45" height="45" viewBox="0 0 45 45"><circle cx="22.800" cy="22.100" r="20" fill="#f6fbfa" stroke="#30ad8f" stroke-width="4"/><path d="M22.800 12.200L32.700 22.700h-5.700v9.200h-8.400v-9.200h-5.700z" fill="#30ad8f"/></svg>
<!--EXTRAS-END-->
</body>
</html>
